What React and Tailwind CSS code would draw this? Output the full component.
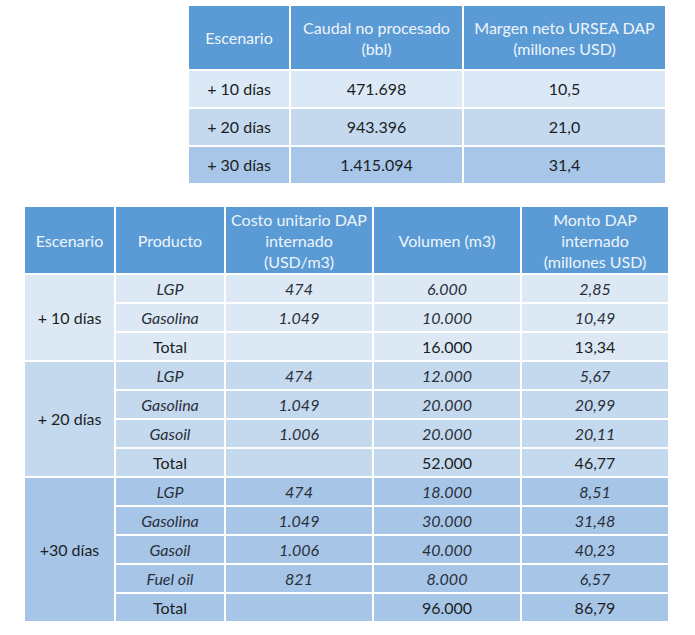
import React from "react";

const topRows = [
  { esc: "+ 10 días", caudal: "471.698", margen: "10,5", bg: "bg-[#dbe8f5]" },
  { esc: "+ 20 días", caudal: "943.396", margen: "21,0", bg: "bg-[#c4d8ee]" },
  { esc: "+ 30 días", caudal: "1.415.094", margen: "31,4", bg: "bg-[#a8c6e7]" },
];

const groups = [
  {
    esc: "+ 10 días",
    bg: "bg-[#dce9f5]",
    rows: [
      ["LGP", "474", "6.000", "2,85"],
      ["Gasolina", "1.049", "10.000", "10,49"],
    ],
    total: ["16.000", "13,34"],
  },
  {
    esc: "+ 20 días",
    bg: "bg-[#c4d9ee]",
    rows: [
      ["LGP", "474", "12.000", "5,67"],
      ["Gasolina", "1.049", "20.000", "20,99"],
      ["Gasoil", "1.006", "20.000", "20,11"],
    ],
    total: ["52.000", "46,77"],
  },
  {
    esc: "+30 días",
    bg: "bg-[#a7c6e7]",
    rows: [
      ["LGP", "474", "18.000", "8,51"],
      ["Gasolina", "1.049", "30.000", "31,48"],
      ["Gasoil", "1.006", "40.000", "40,23"],
      ["Fuel oil", "821", "8.000", "6,57"],
    ],
    total: ["96.000", "86,79"],
  },
];

const Head = ({ w, children }) => (
  <div
    className={`${w} bg-[#5b9bd5] text-[#eef4fb] flex items-center justify-center text-center leading-[21px]`}
  >
    <div>{children}</div>
  </div>
);

const Cell = ({ w, bg, italic, children }) => (
  <div
    className={`${w} ${bg} h-[27px] flex items-center justify-center ${
      italic ? "italic text-[#2a2f3a]" : "text-[#1b1e24]"
    }`}
  >
    {children}
  </div>
);

const App = () => {
  return (
    <div
      className="w-[695px] h-[635px] bg-white relative overflow-hidden text-[16px]"
      style={{ fontFamily: "Lato, 'Open Sans', sans-serif" }}
    >
      {/* tabla superior */}
      <div className="pt-[6px] pl-[189px]">
        <div className="flex flex-col gap-[2px] w-[476px]">
          <div className="flex gap-[2px] h-[63px]">
            <Head w="w-[100px]">Escenario</Head>
            <Head w="w-[171px]">
              Caudal no procesado
              <br />
              (bbl)
            </Head>
            <Head w="w-[201px]">
              Margen neto URSEA DAP
              <br />
              (millones USD)
            </Head>
          </div>
          {topRows.map((r) => (
            <div key={r.esc} className="flex gap-[2px] h-[36px] text-[#1b1e24]">
              <div className={`w-[100px] ${r.bg} flex items-center justify-center`}>{r.esc}</div>
              <div className={`w-[171px] ${r.bg} flex items-center justify-center`}>{r.caudal}</div>
              <div className={`w-[201px] ${r.bg} flex items-center justify-center`}>{r.margen}</div>
            </div>
          ))}
        </div>
      </div>

      {/* tabla inferior */}
      <div className="pt-[24px] pl-[25px]">
        <div className="flex flex-col gap-[2px] w-[643px]">
          <div className="flex gap-[2px] h-[66px]">
            <Head w="w-[89px]">Escenario</Head>
            <Head w="w-[108px]">Producto</Head>
            <Head w="w-[146px]">
              Costo unitario DAP
              <br />
              internado
              <br />
              (USD/m3)
            </Head>
            <Head w="w-[146px]">Volumen (m3)</Head>
            <Head w="w-[146px]">
              Monto DAP
              <br />
              internado
              <br />
              (millones USD)
            </Head>
          </div>

          {groups.map((g) => (
            <div key={g.esc} className="flex gap-[2px]">
              <div className={`w-[89px] ${g.bg} flex items-center justify-center text-[#1b1e24]`}>
                {g.esc}
              </div>
              <div className="flex flex-col gap-[2px]">
                {g.rows.map((r) => (
                  <div key={r[0]} className="flex gap-[2px]">
                    <Cell w="w-[108px]" bg={g.bg} italic>{r[0]}</Cell>
                    <Cell w="w-[146px]" bg={g.bg} italic>{r[1]}</Cell>
                    <Cell w="w-[146px]" bg={g.bg} italic>{r[2]}</Cell>
                    <Cell w="w-[146px]" bg={g.bg} italic>{r[3]}</Cell>
                  </div>
                ))}
                <div className="flex gap-[2px]">
                  <Cell w="w-[108px]" bg={g.bg}>Total</Cell>
                  <Cell w="w-[146px]" bg={g.bg}></Cell>
                  <Cell w="w-[146px]" bg={g.bg}>{g.total[0]}</Cell>
                  <Cell w="w-[146px]" bg={g.bg}>{g.total[1]}</Cell>
                </div>
              </div>
            </div>
          ))}
        </div>
      </div>
    </div>
  );
};

export default App;
